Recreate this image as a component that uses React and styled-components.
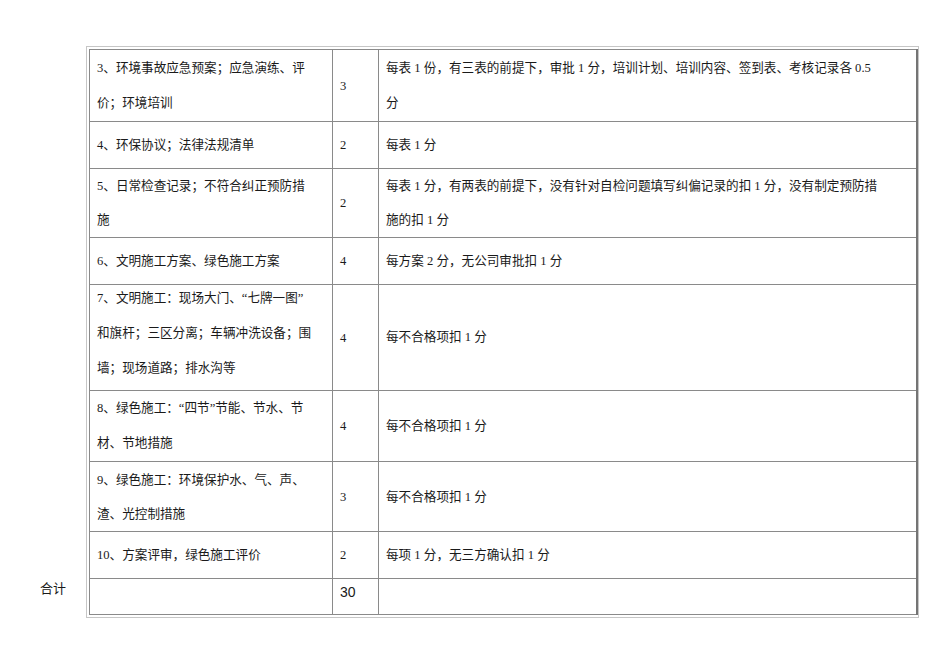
import styled, { createGlobalStyle } from "styled-components";

const Global = createGlobalStyle`
body {
  margin: 0;
  background: #fff;
  color: #1a1a1a;
  font-family: "Liberation Serif", "Noto Sans CJK SC", serif;
}
`

const Page = styled.div`
display: flex;
padding-top: 46px;
`
const Side = styled.div`
width: 86px;
display: flex;
flex-direction: column;
justify-content: flex-end;
`
const Label = styled.div`
padding: 0 0 19px 40px;
font-size: 13px;
line-height: 20px;
`
const Frame = styled.div`
border: 1px solid #c6c6c6;
padding: 2px 0 2px 2px;
`
const Table = styled.table`
border-collapse: collapse;
table-layout: fixed;
width: 827px;
border: 1px solid #808080;
border-right: 2px solid #747474;
`
const Row = styled.tr`
height: ${props => props.h}px;
`
const Cell = styled.td`
border: 1px solid #8a8a8a;
padding: 0 7px;
vertical-align: middle;
font-size: 12.6px;
line-height: 20px;
white-space: nowrap;
`
const TotalCell = styled(Cell)`
vertical-align: top;
padding-top: 3px;
`
const Lines = styled.div`
line-height: ${props => props.lh || 34}px;
transform: translateY(${props => props.lift || 0}px);
`
const Total = styled.span`
font-family: "Liberation Sans", Arial, sans-serif;
font-size: 14px;
`

const rows = [
  { h: 72, lh: 35, item: ["3、环境事故应急预案；应急演练、评", "价；环境培训"], score: "3",
    rule: ["每表 1 份，有三表的前提下，审批 1 分，培训计划、培训内容、签到表、考核记录各 0.5", "分"] },
  { h: 47, item: ["4、环保协议；法律法规清单"], score: "2", rule: ["每表 1 分"] },
  { h: 69, item: ["5、日常检查记录；不符合纠正预防措", "施"], score: "2",
    rule: ["每表 1 分，有两表的前提下，没有针对自检问题填写纠偏记录的扣 1 分，没有制定预防措", "施的扣 1 分"] },
  { h: 47, item: ["6、文明施工方案、绿色施工方案"], score: "4", rule: ["每方案 2 分，无公司审批扣 1 分"] },
  { h: 106, lh: 35, item: ["7、文明施工：现场大门、“七牌一图”", "和旗杆；三区分离；车辆冲洗设备；围", "墙；现场道路；排水沟等"], score: "4",
    rule: ["每不合格项扣 1 分"], lift: -4 },
  { h: 71, lh: 35, item: ["8、绿色施工：“四节”节能、节水、节", "材、节地措施"], score: "4", rule: ["每不合格项扣 1 分"] },
  { h: 70, item: ["9、绿色施工：环境保护水、气、声、", "渣、光控制措施"], score: "3", rule: ["每不合格项扣 1 分"] },
  { h: 47, item: ["10、方案评审，绿色施工评价"], score: "2", rule: ["每项 1 分，无三方确认扣 1 分"] },
]

function Text ({ lines, lift, lh }) {
  return (
    <Lines lift={lift} lh={lh}>
      {lines.map((l, i) => <div key={i}>{l}</div>)}
    </Lines>
  )
}

export default function App () {
  return (
    <>
      <Global />
      <Page>
        <Side>
          <Label>合计</Label>
        </Side>
        <Frame>
          <Table>
            <colgroup>
              <col style={{ width: 243 }} />
              <col style={{ width: 46 }} />
              <col style={{ width: 538 }} />
            </colgroup>
            <tbody>
              {rows.map((r, i) => (
                <Row h={r.h} key={i}>
                  <Cell><Text lines={r.item} lift={r.lift} lh={r.lh} /></Cell>
                  <Cell>{r.score}</Cell>
                  <Cell><Text lines={r.rule} lh={r.lh} /></Cell>
                </Row>
              ))}
              <Row h={36}>
                <TotalCell></TotalCell>
                <TotalCell><Total>30</Total></TotalCell>
                <TotalCell></TotalCell>
              </Row>
            </tbody>
          </Table>
        </Frame>
      </Page>
    </>
  )
}
